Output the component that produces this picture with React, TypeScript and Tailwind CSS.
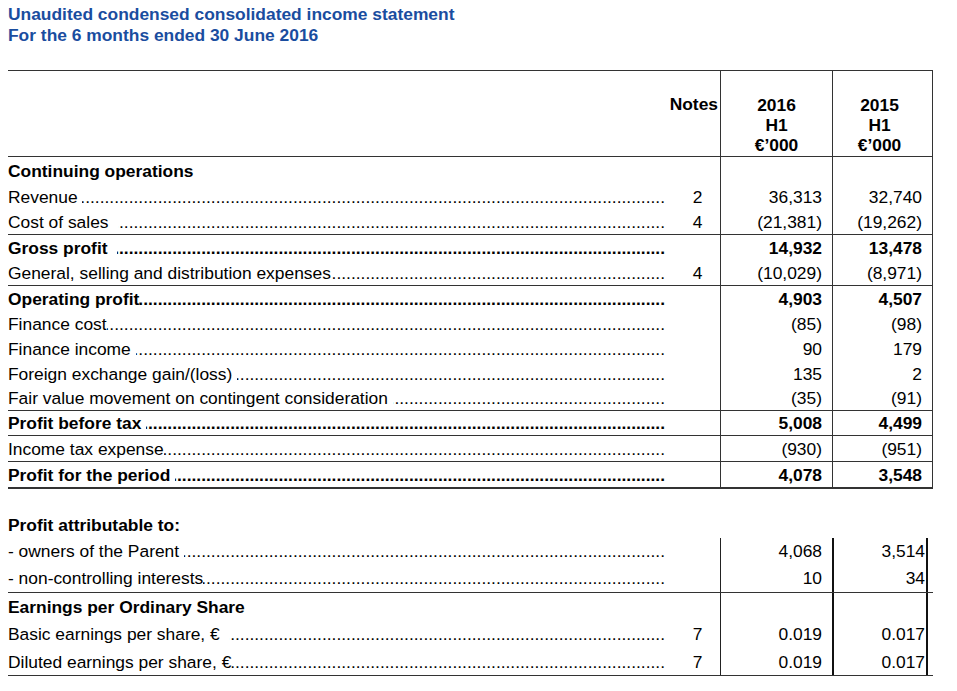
import React from "react";

type Line = {
  label: string;
  bold?: boolean;
  heading?: boolean;
  note?: string;
  a?: string;
  b?: string;
  h: string;
  rule?: "thin" | "thick";
};

// Leader dots are right-aligned so every row ends on the same tab stop.
const DOTS = ".".repeat(220);

const upper: Line[] = [
  { label: "Continuing operations", bold: true, heading: true, h: "h-[27px]" },
  { label: "Revenue ", note: "2", a: "36,313", b: "32,740", h: "h-[25px]" },
  { label: "Cost of sales  ", note: "4", a: "(21,381)", b: "(19,262)", h: "h-[26px]", rule: "thin" },
  { label: "Gross profit  ", bold: true, a: "14,932", b: "13,478", h: "h-[25px]" },
  { label: "General, selling and distribution expenses", note: "4", a: "(10,029)", b: "(8,971)", h: "h-[26px]", rule: "thin" },
  { label: "Operating profit", bold: true, a: "4,903", b: "4,507", h: "h-[25px]" },
  { label: "Finance cost", a: "(85)", b: "(98)", h: "h-[25px]" },
  { label: "Finance income ", a: "90", b: "179", h: "h-[25px]" },
  { label: "Foreign exchange gain/(loss) ", a: "135", b: "2", h: "h-[25px]" },
  { label: "Fair value movement on contingent consideration ", a: "(35)", b: "(91)", h: "h-[25px]", rule: "thin" },
  { label: "Profit before tax ", bold: true, a: "5,008", b: "4,499", h: "h-[25px]", rule: "thin" },
  { label: "Income tax expense", a: "(930)", b: "(951)", h: "h-[26px]", rule: "thin" },
  { label: "Profit for the period ", bold: true, a: "4,078", b: "3,548", h: "h-[27px]", rule: "thick" },
];

const lower: Line[] = [
  { label: "- owners of the Parent ", a: "4,068", b: "3,514", h: "h-[25px]" },
  { label: "- non-controlling interests", a: "10", b: "34", h: "h-[30px]", rule: "thin" },
  { label: "Earnings per Ordinary Share", bold: true, heading: true, h: "h-[27px]" },
  { label: "Basic earnings per share, €  ", note: "7", a: "0.019", b: "0.017", h: "h-[28px]" },
  { label: "Diluted earnings per share, €", note: "7", a: "0.019", b: "0.017", h: "h-[28px]", rule: "thin" },
];

function Label({ line }: { line: Line }) {
  return (
    <div className={`flex min-w-0 items-center ${line.bold ? "font-bold" : ""}`}>
      <span className="shrink-0 whitespace-pre">{line.label}</span>
      {!line.heading && (
        <span className="flex min-w-0 flex-1 justify-end overflow-hidden">
          <span className="shrink-0 whitespace-nowrap">{DOTS}</span>
        </span>
      )}
    </div>
  );
}

function UpperRow({ line }: { line: Line }) {
  const rule =
    line.rule === "thick"
      ? "border-b-2 border-[#333]"
      : line.rule === "thin"
        ? "border-b border-[#333]"
        : "";
  return (
    <div className={`grid grid-cols-[657px_55px_112px_101px] ${line.h} ${rule}`}>
      <Label line={line} />
      <div className="flex items-center justify-center pl-[10px]">{line.note}</div>
      <div className={`flex items-center justify-end border-l border-[#333] pr-[10px] ${line.bold ? "font-bold" : ""}`}>
        {line.a}
      </div>
      <div className={`flex items-center justify-end border-x border-[#333] pr-[10px] ${line.bold ? "font-bold" : ""}`}>
        {line.b}
      </div>
    </div>
  );
}

function LowerRow({ line }: { line: Line }) {
  const rule = line.rule ? "border-b border-[#333]" : "";
  return (
    <div className={`grid grid-cols-[657px_55px_112px_96px] ${line.h} ${rule}`}>
      <Label line={line} />
      <div className="flex items-center justify-center pl-[10px]">{line.note}</div>
      <div className="flex items-center justify-end border-l border-[#222] pr-[10px]">{line.a}</div>
      <div className="flex items-center justify-end border-x-2 border-[#111] pr-[1px]">{line.b}</div>
    </div>
  );
}

export default function App() {
  return (
    <div className="min-h-[691px] w-[957px] bg-white font-['Liberation_Sans',Arial,sans-serif] text-[17.4px] leading-[20px] text-black">
      <div className="ml-[8px] w-[925px] pt-[4px]">
        <div className="font-bold leading-[21px] text-[#1a4d9f]">
          <div>Unaudited condensed consolidated income statement</div>
          <div>For the 6 months ended 30 June 2016</div>
        </div>

        {/* header */}
        <div className="mt-[24px] grid h-[87px] grid-cols-[657px_55px_112px_101px] border-y border-[#333] font-bold">
          <div />
          <div className="pr-[2px] pt-[23px] text-right">Notes</div>
          <div className="flex flex-col items-center border-l border-[#333] pt-[24px]">
            <span>2016</span>
            <span>H1</span>
            <span>€’000</span>
          </div>
          <div className="flex flex-col items-center border-x border-[#333] pr-[6px] pt-[24px]">
            <span>2015</span>
            <span>H1</span>
            <span>€’000</span>
          </div>
        </div>

        {upper.map((line) => (
          <UpperRow key={line.label} line={line} />
        ))}

        <div className="mt-[22px] flex h-[27px] items-center font-bold">Profit attributable to:</div>
        {lower.map((line) => (
          <LowerRow key={line.label} line={line} />
        ))}
      </div>
    </div>
  );
}
